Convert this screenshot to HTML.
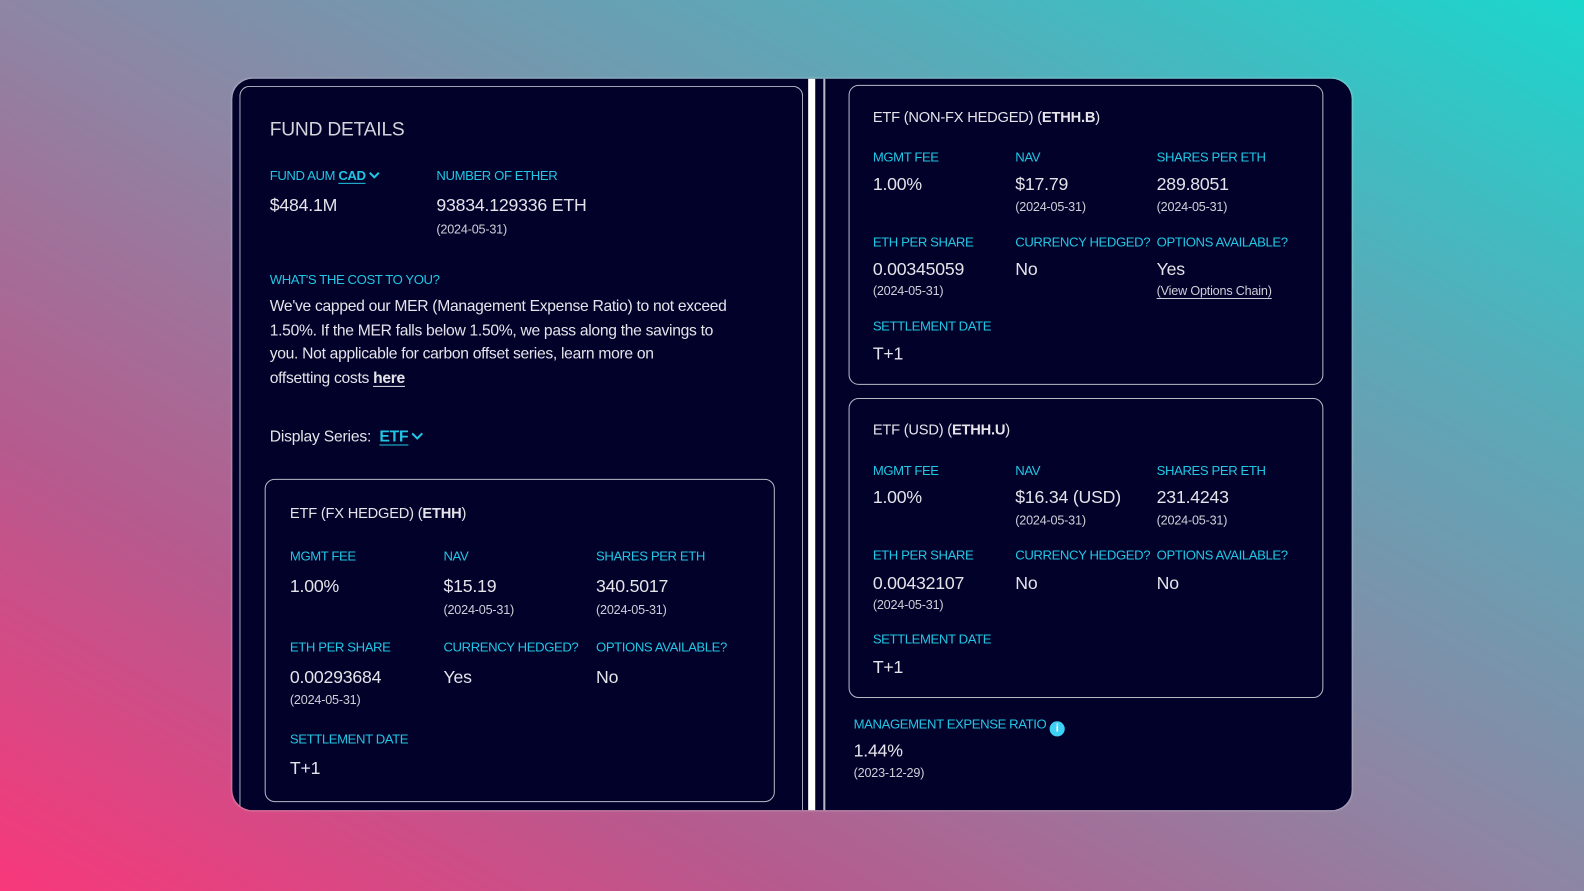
<!DOCTYPE html>
<html><head><meta charset="utf-8"><style>
*{margin:0;padding:0;box-sizing:border-box}
html,body{width:1584px;height:891px;overflow:hidden}
body{background:linear-gradient(to top right,#f8387a 0%,#b65a8e 25%,#8d86a4 50%,#5ba9b8 75%,#1ad7cd 100%);font-family:"Liberation Sans",sans-serif}
#w{position:absolute;left:0;top:0;width:1568px;height:882px;transform:scale(1.0102);transform-origin:0 0}
.p{position:absolute;left:230px;top:78px;width:1108px;height:724px;background:#02012a;border-radius:20px;overflow:hidden;box-shadow:0 0 2px rgba(255,255,255,.5)}
.b{position:absolute;border:1.5px solid #b9b9c6;border-radius:10px}
.t{position:absolute;white-space:nowrap;line-height:20px;color:#e4e4ea;letter-spacing:-0.2px}
.l{color:#22c6e4;font-size:13px;letter-spacing:-0.4px}
.v{font-size:17.5px}
.d{font-size:12.5px;color:#cfcfd8}
.h{font-size:14.5px}
u{text-underline-offset:3px}
svg.c{display:inline-block;vertical-align:1px;margin-left:3px}
</style></head><body><div id="w">
<div class="p">
<div class="b" style="left:7px;top:7px;width:558px;height:740px;border-bottom:none"></div>
</div>
<div style="position:absolute;left:800px;top:78px;width:7px;height:724px;background:#fff"></div>
<div style="position:absolute;left:815px;top:78px;width:1.5px;height:724px;background:#b9b9c6"></div>
<div class="b" style="left:840px;top:84px;width:470px;height:297px"></div>
<div class="b" style="left:840px;top:394px;width:470px;height:297px"></div>
<div class="b" style="left:262px;top:474px;width:505px;height:320px"></div>

<div class="t" style="left:267px;top:119px;font-size:19px;color:#d4d4dc">FUND DETAILS</div>
<div class="t l" style="left:267px;top:164px">FUND AUM <b><u>CAD</u></b><svg class="c" width="11" height="7" viewBox="0 0 11 7"><path d="M1 1l4.5 4.5L10 1" stroke="#22c6e4" stroke-width="2" fill="none"/></svg></div>
<div class="t l" style="left:432px;top:164px">NUMBER OF ETHER</div>
<div class="t v" style="left:267px;top:193px">$484.1M</div>
<div class="t v" style="left:432px;top:193px">93834.129336 ETH</div>
<div class="t d" style="left:432px;top:217px">(2024-05-31)</div>
<div class="t l" style="left:267px;top:267px">WHAT'S THE COST TO YOU?</div>
<div class="t" style="left:267px;top:292px;font-size:15.5px;line-height:23.5px;letter-spacing:-0.3px">We've capped our MER (Management Expense Ratio) to not exceed<br>1.50%. If the MER falls below 1.50%, we pass along the savings to<br>you. Not applicable for carbon offset series, learn more on<br>offsetting costs <b><u>here</u></b></div>
<div class="t" style="left:267px;top:423px;font-size:15.5px">Display Series:&nbsp; <span style="color:#22c6e4"><b><u>ETF</u></b><svg class="c" width="12" height="8" viewBox="0 0 12 8"><path d="M1 1l5 5 5-5" stroke="#22c6e4" stroke-width="2" fill="none"/></svg></span></div>

<div class="t h" style="left:287px;top:499px">ETF (FX HEDGED) (<b>ETHH</b>)</div>
<div class="t l" style="left:287px;top:541px">MGMT FEE</div><div class="t l" style="left:439px;top:541px">NAV</div><div class="t l" style="left:590px;top:541px">SHARES PER ETH</div>
<div class="t v" style="left:287px;top:570px">1.00%</div><div class="t v" style="left:439px;top:570px">$15.19</div><div class="t v" style="left:590px;top:570px">340.5017</div>
<div class="t d" style="left:439px;top:594px">(2024-05-31)</div><div class="t d" style="left:590px;top:594px">(2024-05-31)</div>
<div class="t l" style="left:287px;top:631px">ETH PER SHARE</div><div class="t l" style="left:439px;top:631px">CURRENCY HEDGED?</div><div class="t l" style="left:590px;top:631px">OPTIONS AVAILABLE?</div>
<div class="t v" style="left:287px;top:660px">0.00293684</div><div class="t v" style="left:439px;top:660px">Yes</div><div class="t v" style="left:590px;top:660px">No</div>
<div class="t d" style="left:287px;top:683px">(2024-05-31)</div>
<div class="t l" style="left:287px;top:722px">SETTLEMENT DATE</div>
<div class="t v" style="left:287px;top:750px">T+1</div>

<div class="t h" style="left:864px;top:107px">ETF (NON-FX HEDGED) (<b>ETHH.B</b>)</div>
<div class="t l" style="left:864px;top:146px">MGMT FEE</div><div class="t l" style="left:1005px;top:146px">NAV</div><div class="t l" style="left:1145px;top:146px">SHARES PER ETH</div>
<div class="t v" style="left:864px;top:172px">1.00%</div><div class="t v" style="left:1005px;top:172px">$17.79</div><div class="t v" style="left:1145px;top:172px">289.8051</div>
<div class="t d" style="left:1005px;top:195px">(2024-05-31)</div><div class="t d" style="left:1145px;top:195px">(2024-05-31)</div>
<div class="t l" style="left:864px;top:230px">ETH PER SHARE</div><div class="t l" style="left:1005px;top:230px">CURRENCY HEDGED?</div><div class="t l" style="left:1145px;top:230px">OPTIONS AVAILABLE?</div>
<div class="t v" style="left:864px;top:256px">0.00345059</div><div class="t v" style="left:1005px;top:256px">No</div><div class="t v" style="left:1145px;top:256px">Yes</div>
<div class="t d" style="left:864px;top:278px">(2024-05-31)</div><div class="t d" style="left:1145px;top:278px"><u>(View Options Chain)</u></div>
<div class="t l" style="left:864px;top:313px">SETTLEMENT DATE</div>
<div class="t v" style="left:864px;top:340px">T+1</div>

<div class="t h" style="left:864px;top:416px">ETF (USD) (<b>ETHH.U</b>)</div>
<div class="t l" style="left:864px;top:456px">MGMT FEE</div><div class="t l" style="left:1005px;top:456px">NAV</div><div class="t l" style="left:1145px;top:456px">SHARES PER ETH</div>
<div class="t v" style="left:864px;top:482px">1.00%</div><div class="t v" style="left:1005px;top:482px">$16.34 (USD)</div><div class="t v" style="left:1145px;top:482px">231.4243</div>
<div class="t d" style="left:1005px;top:505px">(2024-05-31)</div><div class="t d" style="left:1145px;top:505px">(2024-05-31)</div>
<div class="t l" style="left:864px;top:540px">ETH PER SHARE</div><div class="t l" style="left:1005px;top:540px">CURRENCY HEDGED?</div><div class="t l" style="left:1145px;top:540px">OPTIONS AVAILABLE?</div>
<div class="t v" style="left:864px;top:567px">0.00432107</div><div class="t v" style="left:1005px;top:567px">No</div><div class="t v" style="left:1145px;top:567px">No</div>
<div class="t d" style="left:864px;top:589px">(2024-05-31)</div>
<div class="t l" style="left:864px;top:623px">SETTLEMENT DATE</div>
<div class="t v" style="left:864px;top:650px">T+1</div>

<div class="t l" style="left:845px;top:707px">MANAGEMENT EXPENSE RATIO <span style="display:inline-block;width:15px;height:15px;border-radius:50%;background:#3fd0f5;color:#fff;font-size:11px;line-height:15px;text-align:center;vertical-align:-3px;font-weight:bold">i</span></div>
<div class="t v" style="left:845px;top:733px">1.44%</div>
<div class="t d" style="left:845px;top:755px">(2023-12-29)</div>
</div></body></html>
